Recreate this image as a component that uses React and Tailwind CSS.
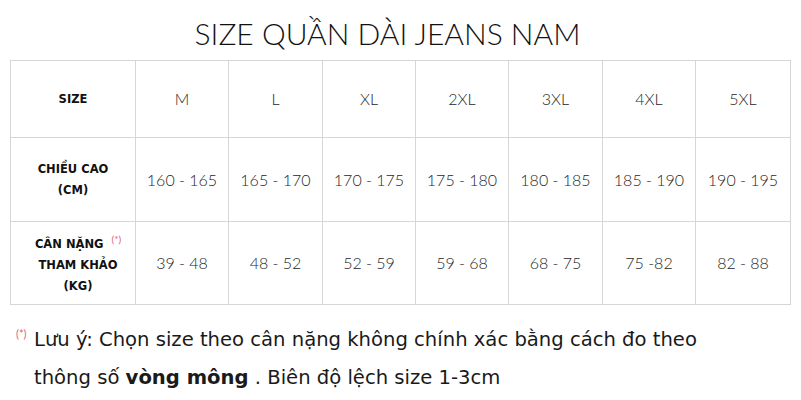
import React from "react";

const cols = ["M", "L", "XL", "2XL", "3XL", "4XL", "5XL"];
const heights = ["160 - 165", "165 - 170", "170 - 175", "175 - 180", "180 - 185", "185 - 190", "190 - 195"];
const weights = ["39 - 48", "48 - 52", "52 - 59", "59 - 68", "68 - 75", "75 -82", "82 - 88"];

const cell = "flex items-center justify-center border-r border-b border-[#d6d6d6] text-center";
const val = `${cell} text-[16px] text-[#262626] font-light`;
const lab = `${cell} text-[11.5px] font-bold text-[#111] leading-[21px] font-['DejaVu_Sans',sans-serif]`;

function Star() {
  return <span className="text-[#e0607a] text-[10px] font-normal align-super ml-[8px] font-['Lato',sans-serif]">(*)</span>;
}

export default function App() {
  return (
    <div className="w-[801px] h-[400px] bg-white overflow-hidden" style={{ fontFamily: "Lato, 'Noto Sans', sans-serif" }}>
      <div className="h-[60px] flex justify-center pt-[14px] pr-[26px]">
        <h1 className="text-[30px] leading-[38px] font-light text-[#111]">SIZE QUẦN DÀI JEANS NAM</h1>
      </div>
      <div className="ml-[10px] w-[781px] border-t border-l border-[#d6d6d6] grid grid-cols-[125px_93px_94px_93px_93px_94px_93px_95px] grid-rows-[77px_84px_83px]">
        <div className={lab}>SIZE</div>
        {cols.map((c) => <div key={c} className={val}>{c}</div>)}
        <div className={lab}><div>CHIỀU CAO<br />(CM)</div></div>
        {heights.map((c) => <div key={c} className={val}>{c}</div>)}
        <div className={lab}><div className="pl-[10px]">CÂN NẶNG<Star /><br />THAM KHẢO<br />(KG)</div></div>
        {weights.map((c) => <div key={c} className={val}>{c}</div>)}
      </div>
      <div className="pl-[16px] pt-[16px] text-[19.6px] leading-[38px] text-[#1a1a1a] font-['DejaVu_Sans',sans-serif]">
        <div className="flex">
          <span className="w-[18px] text-[#e0607a] text-[11px] leading-[26px] font-['Lato',sans-serif]">(*)</span>
          <div>
            <div>Lưu ý: Chọn size theo cân nặng không chính xác bằng cách đo theo</div>
            <div>thông số <b className="font-bold">vòng mông</b> . Biên độ lệch size 1-3cm</div>
          </div>
        </div>
      </div>
    </div>
  );
}
